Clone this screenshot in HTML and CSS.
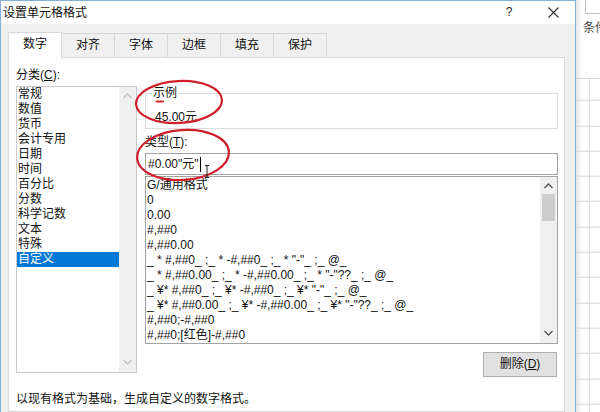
FILE: index.html
```html
<!DOCTYPE html>
<html lang="zh-CN">
<head>
<meta charset="utf-8">
<title>设置单元格格式</title>
<link rel="stylesheet" href="styles.css">
</head>
<body>
<div class="screen">
  <div class="dialog">
    <div class="titlebar">
      <span class="title">设置单元格格式</span>
      <span class="help">?</span>
      <span class="close"><svg width="11" height="11" viewBox="0 0 11 11"><path d="M0.5 0.5 L10.5 10.5 M10.5 0.5 L0.5 10.5" stroke="#333" stroke-width="1.1" fill="none"/></svg></span>
    </div>
    <div class="body">
      <div class="tabs">
        <div class="tab active">数字</div>
        <div class="tab">对齐</div>
        <div class="tab">字体</div>
        <div class="tab">边框</div>
        <div class="tab">填充</div>
        <div class="tab">保护</div>
      </div>
      <div class="page">
        <div class="cols">
          <div class="left">
            <div class="label">分类(<u>C</u>):</div>
            <div class="catlist">
              <div class="items">
                <div class="item">常规</div>
                <div class="item">数值</div>
                <div class="item">货币</div>
                <div class="item">会计专用</div>
                <div class="item">日期</div>
                <div class="item">时间</div>
                <div class="item">百分比</div>
                <div class="item">分数</div>
                <div class="item">科学记数</div>
                <div class="item">文本</div>
                <div class="item">特殊</div>
                <div class="item sel">自定义</div>
              </div>
              <div class="vscroll off">
                <svg class="arr" width="9" height="6" viewBox="0 0 9 6"><path d="M0.5 5 L4.5 1 L8.5 5" stroke="#c2c2c2" stroke-width="1.3" fill="none"/></svg>
                <svg class="arr" width="9" height="6" viewBox="0 0 9 6"><path d="M0.5 1 L4.5 5 L8.5 1" stroke="#c2c2c2" stroke-width="1.3" fill="none"/></svg>
              </div>
            </div>
          </div>
          <div class="right">
            <fieldset class="sample">
              <legend>示例</legend>
              <div class="sample-val">45.00元</div>
            </fieldset>
            <div class="label typelabel">类型(<u>T</u>):</div>
            <div class="input">#0.00"元"<span class="caret"></span></div>
            <div class="fmtlist">
              <div class="items fmt">
                <div class="item">G/通用格式</div>
                <div class="item">0</div>
                <div class="item">0.00</div>
                <div class="item">#,##0</div>
                <div class="item">#,##0.00</div>
                <div class="item">_ * #,##0_ ;_ * -#,##0_ ;_ * "-"_ ;_ @_</div>
                <div class="item">_ * #,##0.00_ ;_ * -#,##0.00_ ;_ * "-"??_ ;_ @_</div>
                <div class="item">_ ¥* #,##0_ ;_ ¥* -#,##0_ ;_ ¥* "-"_ ;_ @_</div>
                <div class="item">_ ¥* #,##0.00_ ;_ ¥* -#,##0.00_ ;_ ¥* "-"??_ ;_ @_</div>
                <div class="item">#,##0;-#,##0</div>
                <div class="item">#,##0;[红色]-#,##0</div>
              </div>
              <div class="vscroll">
                <svg class="arr" width="9" height="6" viewBox="0 0 9 6"><path d="M0.5 5 L4.5 1 L8.5 5" stroke="#555" stroke-width="1.3" fill="none"/></svg>
                <div class="thumb"></div>
                <div class="track"></div>
                <svg class="arr" width="9" height="6" viewBox="0 0 9 6"><path d="M0.5 1 L4.5 5 L8.5 1" stroke="#555" stroke-width="1.3" fill="none"/></svg>
              </div>
            </div>
            <button class="btn" type="button">删除(<u>D</u>)</button>
          </div>
        </div>
        <div class="desc">以现有格式为基础，生成自定义的数字格式。</div>
      </div>
    </div>
  </div>
  <div class="sheet">
    <div class="sheet-top">
      <div class="ribbon-btn"></div>
      <div class="ribbon-label">条件</div>
    </div>
    <div class="grid"></div>
  </div>
  <svg class="marks" width="600" height="412" viewBox="0 0 600 412">
    <ellipse cx="179" cy="102" rx="43" ry="21" fill="none" stroke="#cf1f2b" stroke-width="2.2" transform="rotate(-3 179 102)"/>
    <ellipse cx="183" cy="155" rx="46" ry="25" fill="none" stroke="#cf1f2b" stroke-width="2.2" transform="rotate(-4 183 155)"/>
    <path d="M156.5 101.5 L163 101.5" stroke="#d9262f" stroke-width="2" stroke-linecap="round"/>
    <path d="M205 165.5 H209 M207 165.5 V177.5 M205 177.5 H209" stroke="#222" stroke-width="1" fill="none"/>
  </svg>
</div>
</body>
</html>
```

FILE: styles.css
```css
* { box-sizing: border-box; }
html, body { margin: 0; padding: 0; }
body {
  width: 600px;
  height: 412px;
  overflow: hidden;
  background: #fff;
  color: #111;
  font: 12px/15px "Liberation Sans", "Noto Sans CJK SC", sans-serif;
}
u { text-decoration: underline; text-underline-offset: 1px; }

.screen { position: relative; display: flex; height: 412px; }

.dialog {
  width: 576px;
  flex: none;
  height: 412px;
  border: 1px solid #85afd9;
  border-bottom: none;
  background: #f0f0f0;
  display: flex;
  flex-direction: column;
}
.titlebar {
  height: 23px;
  flex: none;
  background: #fff;
  display: flex;
  align-items: center;
  padding: 0 7px 0 2px;
}
.title { flex: 1; line-height: 14px; }
.help { width: 20px; text-align: center; color: #222; margin-right: 19px; font-size: 12px; }
.close { width: 30px; display: flex; justify-content: center; align-items: center; }

.body {
  flex: 1;
  display: flex;
  flex-direction: column;
  padding: 8px 0 0 7px;
  min-height: 0;
}
.tabs { display: flex; align-items: flex-end; height: 25px; flex: none; }
.tab {
  width: 53px;
  height: 24px;
  border: 1px solid #d9d9d9;
  border-left: none;
  border-bottom: none;
  background: #f0f0f0;
  display: flex;
  align-items: center;
  justify-content: center;
  padding-bottom: 1px;
  line-height: 14px;
}
.tab.active {
  width: 54px;
  height: 26px;
  margin-bottom: -1px;
  border-left: 1px solid #d9d9d9;
  background: #fff;
  position: relative;
  z-index: 1;
  padding-bottom: 3px;
}

.page {
  width: 557px;
  flex: 1;
  background: #fff;
  border: 1px solid #d9d9d9;
  padding: 10px 6px 0 7px;
  display: flex;
  flex-direction: column;
}
.cols { display: flex; gap: 8px; }
.left { width: 121px; flex: none; }
.label { height: 14px; line-height: 14px; }

.catlist {
  margin-top: 4px;
  height: 287px;
  border: 1px solid #c9c9c9;
  display: flex;
}
.items { flex: 1; min-width: 0; overflow: hidden; }
.item { height: 15px; line-height: 15px; padding-left: 1px; white-space: pre; }
.item.sel { background: #0078d7; color: #fff; }

.vscroll {
  width: 17px;
  flex: none;
  background: #f0f0f0;
  display: flex;
  flex-direction: column;
  align-items: center;
  padding: 6px 0 7px;
}
.vscroll.off { justify-content: space-between; }
.arr { display: block; flex: none; }
.thumb { width: 13px; height: 27px; background: #cdcdcd; margin-top: 5px; flex: none; }
.track { flex: 1; }

.right { width: 413px; flex: none; display: flex; flex-direction: column; }
.sample {
  margin: 18px 0 0;
  padding: 10px 0 4px 6px;
  border: 1px solid #dcdcdc;
  min-width: 0;
}
.sample legend { padding: 0 1px; line-height: 14px; height: 14px; }
.sample-val { line-height: 14px; padding-left: 3px; }
.typelabel { margin-top: 6px; }
.input {
  margin-top: 4px;
  height: 22px;
  border: 1px solid #a3a3a3;
  line-height: 20px;
  padding-left: 2px;
  display: flex;
  align-items: center;
  white-space: pre;
}
.caret { display: inline-block; width: 1px; height: 15px; background: #000; margin-left: 1px; }
.fmtlist {
  margin-top: 1px;
  height: 168px;
  border: 1px solid #a3a3a3;
  display: flex;
}
.fmt { padding-top: 1px; }
.btn {
  align-self: flex-end;
  margin: 8px 1px 0 0;
  width: 74px;
  height: 25px;
  background: #e1e1e1;
  border: 1px solid #adadad;
  font: 12px/15px "Liberation Sans", "Noto Sans CJK SC", sans-serif;
  color: #111;
  padding: 0;
}
.desc { margin-top: 15px; line-height: 14px; }

.sheet {
  flex: 1;
  display: flex;
  flex-direction: column;
  overflow: hidden;
  background:
    linear-gradient(to right, rgba(0,0,0,0.10), rgba(0,0,0,0) 6px),
    #fff;
}
.sheet-top {
  height: 79px;
  flex: none;
  border-bottom: 1px solid #d6d6d6;
  padding-left: 9px;
}
.ribbon-btn {
  width: 20px;
  height: 14px;
  border: 1px solid #bdbdbd;
  border-top: none;
}
.ribbon-label {
  margin: 7px 0 0 -2px;
  line-height: 14px;
  white-space: nowrap;
  color: #444;
}
.grid {
  flex: 1;
  background:
    linear-gradient(to right, transparent 13px, #dadada 13px, #dadada 14px, transparent 14px),
    repeating-linear-gradient(to bottom, transparent 0, transparent 24.3px, #d6d6d6 24.3px, #d6d6d6 25.3px);
  background-position: 0 0, 0 -3.3px;
}

.marks { position: absolute; left: 0; top: 0; pointer-events: none; }
```
